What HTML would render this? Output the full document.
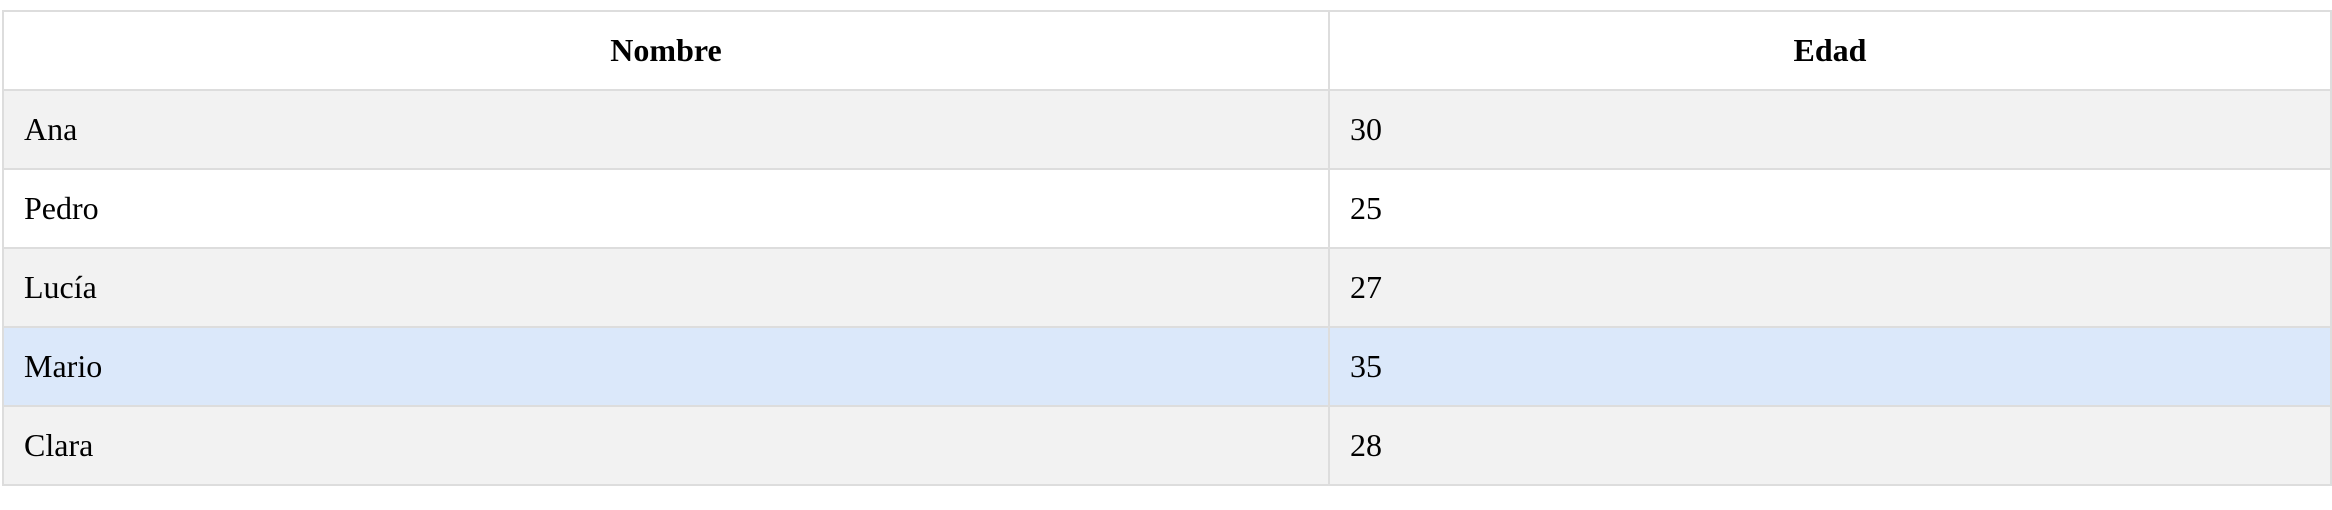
<!DOCTYPE html>
<html><head><meta charset="utf-8"><style>
html,body{margin:0;padding:0;background:#fff;width:2332px;height:510px;overflow:hidden}
table{position:absolute;left:2px;top:10px;border-collapse:collapse;table-layout:fixed;width:2328px;font-family:"Liberation Serif",serif;font-size:32px;color:#000}
td,th{border:2px solid #ddd;height:75px;padding:0 20px;box-sizing:border-box;vertical-align:middle}
th{font-weight:bold;text-align:center;background:#fff}
tr{height:79px}
tr.g td{background:#f2f2f2}
tr.w td{background:#fff}
tr.h td{background:#dbe8fa}
</style></head><body>
<table>
<colgroup><col style="width:1326px"><col style="width:1002px"></colgroup>
<tr><th>Nombre</th><th>Edad</th></tr>
<tr class="g"><td>Ana</td><td>30</td></tr>
<tr class="w"><td>Pedro</td><td>25</td></tr>
<tr class="g"><td>Lucía</td><td>27</td></tr>
<tr class="h"><td>Mario</td><td>35</td></tr>
<tr class="g"><td>Clara</td><td>28</td></tr>
</table>
</body></html>
